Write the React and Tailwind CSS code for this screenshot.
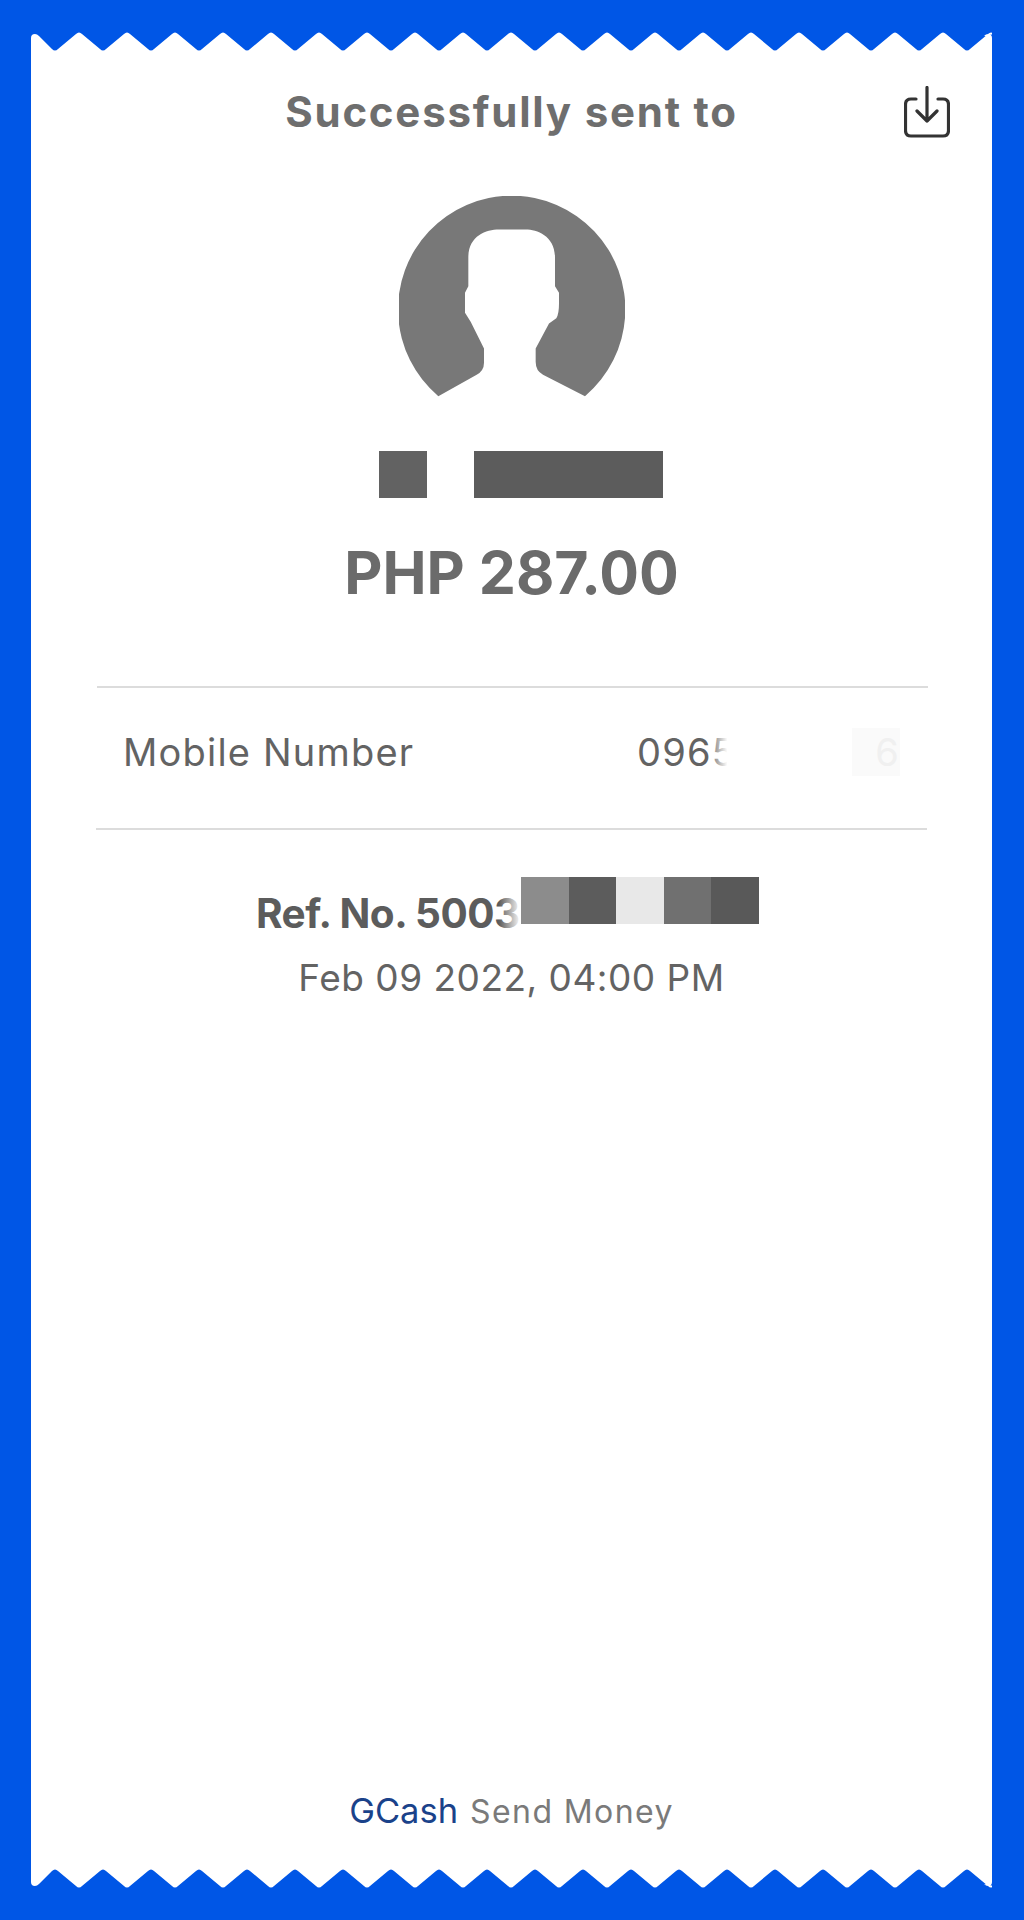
import React from 'react'

const inter = 'font-["Inter",sans-serif]'

// zigzag edge of the receipt, peaks every 48px
const topPoints = () => {
  let d = 'M0 21 L0 7 Q0 3 4 3 Q6 3 8 5'
  for (let x = 24; x <= 936; x += 48) {
    d += ` L${x - 3} 18 Q${x} 21 ${x + 3} 18 L${x + 21} 3 Q${x + 24} 0 ${x + 27} 3`
  }
  return d + ' L953 5 Q955 3 957 3 Q961 3 961 7 L961 21 Z'
}

const ReceiptEdge = ({ flip }) => (
  <svg viewBox="0 0 961 21" className={flip ? 'block w-[961px] h-[21px] -scale-y-100' : 'block w-[961px] h-[21px]'}>
    <path d={topPoints()} fill="#ffffff" />
  </svg>
)

const Avatar = () => (
  <svg viewBox="180 78 678 602" className="block w-[226px] h-[201px]">
    <path
      fill="#787878"
      d="M298 678 A341 341 0 1 1 738 678 L612 614 Q590 602 590 575 L590 535 L630 460 L652 444 Q660 432 660 400 L660 368 L648 348 L648 262 C648 198 595 178 560 178 L480 178 C440 178 388 198 388 262 L388 348 L378 368 L378 428 L395 455 L435 535 L435 578 Q435 602 413 614 Z"
    />
  </svg>
)

const DownloadIcon = () => (
  <svg viewBox="0 0 46 52" fill="none" stroke="#333333" strokeWidth="3.2" strokeLinecap="round" strokeLinejoin="round" className="block w-[46px] h-[52px]">
    <path d="M12 13 H7 Q1.5 13 1.5 18.5 V44.5 Q1.5 50 7 50 H39 Q44.5 50 44.5 44.5 V18.5 Q44.5 13 39 13 H34" />
    <path d="M23 1.5 V35 M13 25 L23 35 L33 25" />
  </svg>
)

const refBlocks = ['bg-[#8c8c8c]', 'bg-[#5c5c5c]', 'bg-[#e8e8e8]', 'bg-[#707070]', 'bg-[#595959]']

export default function App() {
  return (
    <div className={`h-[1920px] bg-[#0056e6] pl-[31px] pr-[32px] py-[31px] flex flex-col ${inter}`}>
      <ReceiptEdge />

      <div className="flex-1 bg-white flex flex-col items-center">
        {/* Titulo */}
        <div className="w-full mt-[34px] h-[52px] grid grid-cols-[1fr_auto_1fr] items-center">
          <div />
          <h1 className="text-[42px] leading-[52px] font-bold tracking-[1.77px] text-[#6e6e6e]">Successfully sent to</h1>
          <div className="flex justify-end pr-[42px]">
            <DownloadIcon />
          </div>
        </div>

        <div className="mt-[58px]">
          <Avatar />
        </div>

        {/* Nombre tapado */}
        <div className="mt-[54px] ml-[18px] flex gap-[47px]">
          <div className="w-[48px] h-[47px] bg-[#626262]" />
          <div className="w-[189px] h-[47px] bg-[#5c5c5c]" />
        </div>

        <p className="mt-[40px] text-[59px] leading-[70px] font-bold text-[#6b6b6b]">PHP 287.00</p>

        <div className="mt-[78px] w-[831px] mr-[-1px] h-[2px] bg-[#dcdcdc]" />

        <div className="w-[831px] h-[140px] px-[27px] pb-[12px] flex items-center justify-between text-[#636363] text-[38px] tracking-[1.2px]">
          <span>Mobile Number</span>
          <span className="relative flex items-center w-[263px]">
            <span>0965</span>
            <span className="absolute left-[72px] top-[-6px] w-[46px] h-[54px] bg-gradient-to-r from-transparent to-white to-40%" />
            <span className="absolute right-0 top-[4px] w-[48px] h-[48px] leading-[48px] bg-[#fafafa] text-[#f0f0f0] text-right">6</span>
          </span>
        </div>

        <div className="w-[831px] h-[2px] bg-[#dcdcdc]" />

        {/* Referencia */}
        <div className="mt-[47px] mr-[8px] flex items-start">
          <span className="relative mt-[14px] text-[40.5px] leading-[46px] font-bold text-[#5c5c5c] tracking-[-0.5px] w-[265px] whitespace-nowrap">
            Ref. No. 5003
            <span className="absolute right-0 top-0 w-[22px] h-full bg-gradient-to-r from-transparent to-white" />
          </span>
          <div className="flex">
            {refBlocks.map((color) => (
              <div key={color} className={`w-[47.6px] h-[47px] ${color}`} />
            ))}
          </div>
        </div>

        <p className="mt-[19px] text-[37px] leading-[44px] text-[#636363] tracking-[0.5px]">Feb 09 2022, 04:00 PM</p>

        {/* Pie */}
        <div className="mt-auto mb-[36px] flex items-baseline gap-[12px]">
          <span className="text-[34.5px] leading-[40px] text-[#1a428a]">GCash</span>
          <span className="text-[32px] leading-[40px] tracking-[1.4px] text-[#7a7a7a]">Send Money</span>
        </div>
      </div>

      <ReceiptEdge flip />
    </div>
  )
}
